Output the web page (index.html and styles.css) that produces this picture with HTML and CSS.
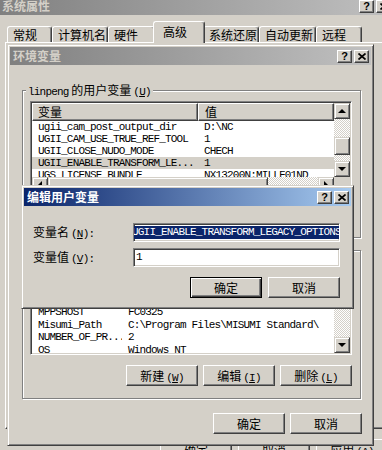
FILE: index.html
```html
<!DOCTYPE html>
<html lang="zh-CN">
<head>
  <meta charset="UTF-8">
  <meta name="viewport" content="width=device-width, initial-scale=1.0">
  <title>编辑用户变量</title>
  <link rel="stylesheet" href="styles.css">
</head>
<body>
  <div class="desktop">

    <!-- System Properties (background window) -->
    <div class="window sysprops">
      <div class="titlebar inactive">
        <span class="title">系统属性</span>
        <span class="title-buttons">
          <span class="tbtn help">?</span>
          <span class="tbtn"><svg width="8" height="7" viewBox="0 0 8 7"><path d="M0.5 0.5 L7.5 6.5 M7.5 0.5 L0.5 6.5" stroke="#000" stroke-width="1.7"/></svg></span>
        </span>
      </div>
      <div class="tabs">
        <span class="tab t-general">常规</span>
        <span class="tab t-computer">计算机名</span>
        <span class="tab t-hardware">硬件</span>
        <span class="tab t-advanced active">高级</span>
        <span class="tab t-restore">系统还原</span>
        <span class="tab t-update">自动更新</span>
        <span class="tab t-remote">远程</span>
      </div>
      <div class="tab-panel"></div>
      <div class="button-row sys-buttons">
        <button class="btn">确定</button>
        <button class="btn">取消</button>
        <button class="btn">应用<span class="key">(<u>A</u>)</span></button>
      </div>
    </div>

    <!-- Environment Variables -->
    <div class="window envvars">
      <div class="titlebar inactive">
        <span class="title">环境变量</span>
        <span class="title-buttons">
          <span class="tbtn help">?</span>
          <span class="tbtn"><svg width="8" height="7" viewBox="0 0 8 7"><path d="M0.5 0.5 L7.5 6.5 M7.5 0.5 L0.5 6.5" stroke="#000" stroke-width="1.7"/></svg></span>
        </span>
      </div>

      <div class="group group-user">
        <span class="group-label"><span class="lat">linpeng</span> 的用户变量<span class="key">(<u>U</u>)</span></span>
        <div class="list list-user">
          <div class="list-body">
            <div class="list-header">
              <span class="hcell c1">变量</span>
              <span class="hcell c2">值</span>
            </div>
            <div class="list-rows">
              <div class="row"><span class="c1">ugii_cam_post_output_dir</span><span class="c2">D:\NC</span></div>
              <div class="row"><span class="c1">UGII_CAM_USE_TRUE_REF_TOOL</span><span class="c2">1</span></div>
              <div class="row"><span class="c1">UGII_CLOSE_NUDO_MODE</span><span class="c2">CHECH</span></div>
              <div class="row selected"><span class="c1">UGII_ENABLE_TRANSFORM_LE...</span><span class="c2">1</span></div>
              <div class="row"><span class="c1">UGS_LICENSE_BUNDLE</span><span class="c2">NX13200N:MILLF01ND</span></div>
            </div>
          </div>
          <div class="vscroll">
            <span class="sbtn"><i class="arrow up"></i></span>
            <span class="track t-18"></span>
            <span class="thumb t-18"></span>
            <span class="track grow"></span>
            <span class="sbtn"><i class="arrow down"></i></span>
          </div>
          <div class="hscroll">
            <span class="sbtn"><i class="arrow left"></i></span>
            <span class="thumb h-thumb"></span>
            <span class="track grow"></span>
            <span class="sbtn"><i class="arrow right"></i></span>
          </div>
          <div class="corner"></div>
        </div>
      </div>

      <div class="group group-sys">
        <span class="group-label">系统变量<span class="key">(<u>S</u>)</span></span>
        <div class="list list-sys">
          <div class="list-body">
            <div class="list-header">
              <span class="hcell c1">变量</span>
              <span class="hcell c2">值</span>
            </div>
            <div class="list-rows">
              <div class="row"><span class="c1">ComSpec</span><span class="c2">C:\WINDOWS\system32\cmd.exe</span></div>
              <div class="row"><span class="c1">FP_NO_HOST_C...</span><span class="c2">NO</span></div>
              <div class="row"><span class="c1">MPPSHOST</span><span class="c2">FC0325</span></div>
              <div class="row"><span class="c1">Misumi_Path</span><span class="c2">C:\Program Files\MISUMI Standard\</span></div>
              <div class="row"><span class="c1">NUMBER_OF_PR...</span><span class="c2">2</span></div>
              <div class="row"><span class="c1">OS</span><span class="c2">Windows_NT</span></div>
            </div>
          </div>
          <div class="vscroll">
            <span class="sbtn"><i class="arrow up"></i></span>
            <span class="thumb t-18"></span>
            <span class="track grow"></span>
            <span class="sbtn"><i class="arrow down"></i></span>
          </div>
        </div>
        <div class="button-row group-buttons">
          <button class="btn">新建<span class="key">(<u>W</u>)</span></button>
          <button class="btn">编辑<span class="key">(<u>I</u>)</span></button>
          <button class="btn">删除<span class="key">(<u>L</u>)</span></button>
        </div>
      </div>

      <div class="button-row env-buttons">
        <button class="btn">确定</button>
        <button class="btn">取消</button>
      </div>
    </div>

    <!-- Edit User Variable (active dialog) -->
    <div class="window editvar">
      <div class="titlebar active">
        <span class="title">编辑用户变量</span>
        <span class="title-buttons">
          <span class="tbtn help">?</span>
          <span class="tbtn"><svg width="8" height="7" viewBox="0 0 8 7"><path d="M0.5 0.5 L7.5 6.5 M7.5 0.5 L0.5 6.5" stroke="#000" stroke-width="1.7"/></svg></span>
        </span>
      </div>
      <div class="field-row first">
        <label class="field-label">变量名<span class="key">(<u>N</u>):</span></label>
        <div class="field"><span class="sel">UGII_ENABLE_TRANSFORM_LEGACY_OPTIONS</span></div>
      </div>
      <div class="field-row">
        <label class="field-label">变量值<span class="key">(<u>V</u>):</span></label>
        <div class="field"><span class="val">1</span></div>
      </div>
      <div class="button-row edit-buttons">
        <button class="btn default">确定</button>
        <button class="btn">取消</button>
      </div>
    </div>

  </div>
</body>
</html>
```

FILE: styles.css
```css
* { box-sizing: border-box; }
body { margin: 0; background: #d4d0c8; }

.desktop {
  position: relative;
  width: 382px;
  height: 450px;
  overflow: hidden;
  background: #d4d0c8;
  font-family: "Noto Sans CJK SC", sans-serif;
  font-size: 12px;
  color: #000;
}

/* latin runs and mnemonic suffixes, narrow like the bitmap font */
.lat, .key {
  font: 11px "Liberation Mono", monospace;
  letter-spacing: -0.8px;
}
.key { margin-left: 2px; }

/* classic raised window frame */
.window {
  position: absolute;
  display: flex;
  flex-direction: column;
  background: #d4d0c8;
  border: 1px solid;
  border-color: #d4d0c8 #404040 #404040 #d4d0c8;
  box-shadow: inset 1px 1px #fff, inset -1px -1px #808080;
  padding: 2px;
}
.sysprops { left: -4px; top: -6px; width: 400px; height: 470px; }
.envvars { left: 7px; top: 44px; width: 367px; height: 402px; }
.editvar { left: 21px; top: 185px; width: 333px; height: 124px; }

.titlebar {
  display: flex;
  align-items: center;
  height: 18px;
  flex: none;
  padding: 0 2px 0 3px;
  font-weight: bold;
  line-height: 18px;
}
.titlebar.inactive { background: linear-gradient(to right, #808080, #c0c0c0); color: #d4d0c8; }
.titlebar.active { background: linear-gradient(to right, #0a246a, #a6caf0); color: #fff; }
.title-buttons { margin-left: auto; display: flex; gap: 2px; }
.tbtn {
  width: 15px;
  height: 13px;
  display: flex;
  align-items: center;
  justify-content: center;
  background: #d4d0c8;
  border: 1px solid;
  border-color: #fff #404040 #404040 #fff;
  box-shadow: inset -1px -1px #808080;
  color: #000;
  font: bold 11px/11px "Liberation Sans", sans-serif;
}

/* tabs */
.tabs {
  display: flex;
  align-items: flex-end;
  height: 21px;
  margin: 6px 0 0 8px;
  flex: none;
}
.tab {
  height: 16px;
  padding-left: 5px;
  line-height: 15px;
  border: 1px solid;
  border-bottom: none;
  border-color: #fff #404040 #fff #fff;
  border-radius: 3px 3px 0 0;
  box-shadow: inset -1px 0 #808080;
  background: #d4d0c8;
}
.tab.active {
  position: relative;
  z-index: 1;
  height: 22px;
  margin: 0 -2px -1px;
  padding-left: 9px;
  line-height: 19px;
}
.t-general { width: 45px; }
.t-computer { width: 56px; }
.t-hardware { width: 47px; }
.t-advanced { width: 52px; }
.t-restore { width: 56px; }
.t-update { width: 57px; }
.t-remote { width: 46px; }

.tab-panel {
  flex: none;
  width: 381px;
  height: 387px;
  margin-left: 6px;
  border: 1px solid;
  border-color: #fff #404040 #404040 #fff;
  box-shadow: inset -1px -1px #808080;
}

/* buttons */
.button-row { display: flex; gap: 5px; flex: none; }
.btn {
  width: 72px;
  height: 21px;
  padding: 0;
  background: #d4d0c8;
  border: 1px solid;
  border-color: #fff #404040 #404040 #fff;
  box-shadow: inset -1px -1px #808080;
  font-family: "Noto Sans CJK SC", sans-serif;
  font-size: 12px;
  line-height: 17px;
  color: #000;
}
.btn.default {
  border-color: #000;
  box-shadow: inset 1px 1px #fff, inset -1px -1px #404040, inset -2px -2px #808080;
}
.sys-buttons { margin: 10px 0 0 161px; gap: 6px; }
.group-buttons { justify-content: flex-end; margin: 10px 8px 0 0; }
.env-buttons { justify-content: flex-end; margin: 14px 9px 0 0; }
.edit-buttons { justify-content: flex-end; margin: 10px 11px 0 0; gap: 6px; }

/* group boxes */
.group {
  position: relative;
  flex: none;
  margin: 0 10px 0 12px;
  border: 1px solid #808080;
  box-shadow: 1px 1px #fff, inset 1px 1px #fff;
}
.group-user { margin-top: 25px; height: 148px; }
.group-sys { margin-top: 12px; height: 149px; }
.group-label {
  position: absolute;
  top: -8px;
  left: 3px;
  padding: 0 2px;
  background: #d4d0c8;
  line-height: 14px;
}

/* list views */
.list {
  display: grid;
  grid-template-columns: 1fr 16px;
  margin: 10px 8px 0 7px;
  padding: 1px;
  background: #fff;
  border: 1px solid;
  border-color: #808080 #fff #fff #808080;
  box-shadow: inset 1px 1px #404040, inset -1px -1px #d4d0c8;
}
.list-user { grid-template-rows: 74px 16px; }
.list-sys { grid-template-rows: 90px; height: 94px; }
.list-body { display: flex; flex-direction: column; overflow: hidden; }
.list-header { display: flex; height: 18px; flex: none; }
.hcell {
  height: 18px;
  padding-left: 5px;
  line-height: 16px;
  background: #d4d0c8;
  border: 1px solid;
  border-color: #fff #404040 #404040 #fff;
  box-shadow: inset -1px -1px #808080;
}
.hcell.c2 { flex: 1; padding-left: 6px; }
.list-rows {
  flex: 1;
  overflow: hidden;
  font: 11px "Liberation Mono", monospace;
  letter-spacing: -0.83px;
}
.row { display: flex; height: 12px; line-height: 12px; white-space: nowrap; }
.list-sys .row { height: 12.5px; line-height: 12.5px; }
.row.selected { background: #d4d0c8; }
.row .c1 { padding-left: 6px; overflow: hidden; flex: none; }
.row .c2 { padding-left: 6px; }
.list-user .c1 { width: 166px; }
.list-sys .c1 { width: 90px; }

/* scroll bars */
.vscroll { display: flex; flex-direction: column; }
.hscroll { display: flex; }
.corner { background: #d4d0c8; }
.sbtn, .thumb {
  display: flex;
  align-items: center;
  justify-content: center;
  flex: none;
  width: 16px;
  height: 16px;
  background: #d4d0c8;
  border: 1px solid;
  border-color: #d4d0c8 #404040 #404040 #d4d0c8;
  box-shadow: inset 1px 1px #fff, inset -1px -1px #808080;
}
.thumb.t-18 { height: 18px; }
.thumb.h-thumb { width: 220px; }
.track {
  flex: none;
  background: repeating-conic-gradient(#d4d0c8 0 25%, #fff 0 50%) 0 0 / 2px 2px;
}
.track.t-18 { height: 18px; }
.track.grow { flex: 1; }
.arrow { width: 0; height: 0; border: 0 solid transparent; }
.arrow.up { border-width: 0 4px 4px; border-bottom-color: #000; }
.arrow.down { border-width: 4px 4px 0; border-top-color: #000; }
.arrow.left { border-width: 4px 4px 4px 0; border-right-color: #000; }
.arrow.right { border-width: 4px 0 4px 4px; border-left-color: #000; }

/* edit dialog fields */
.field-row { display: flex; align-items: center; padding-left: 9px; flex: none; }
.field-row.first { margin-top: 17px; }
.field-row + .field-row { margin-top: 6px; }
.field-label { width: 100px; line-height: 14px; }
.field {
  width: 207px;
  height: 19px;
  padding: 2px 1px;
  overflow: hidden;
  white-space: nowrap;
  background: #fff;
  border: 1px solid;
  border-color: #808080 #fff #fff #808080;
  box-shadow: inset 1px 1px #404040, inset -1px -1px #d4d0c8;
  font: 11px/13px "Liberation Mono", monospace;
  letter-spacing: -0.8px;
}
.sel { display: inline-block; margin-left: -3px; background: #0a246a; color: #fff; }
.val { padding-left: 1px; }
```
